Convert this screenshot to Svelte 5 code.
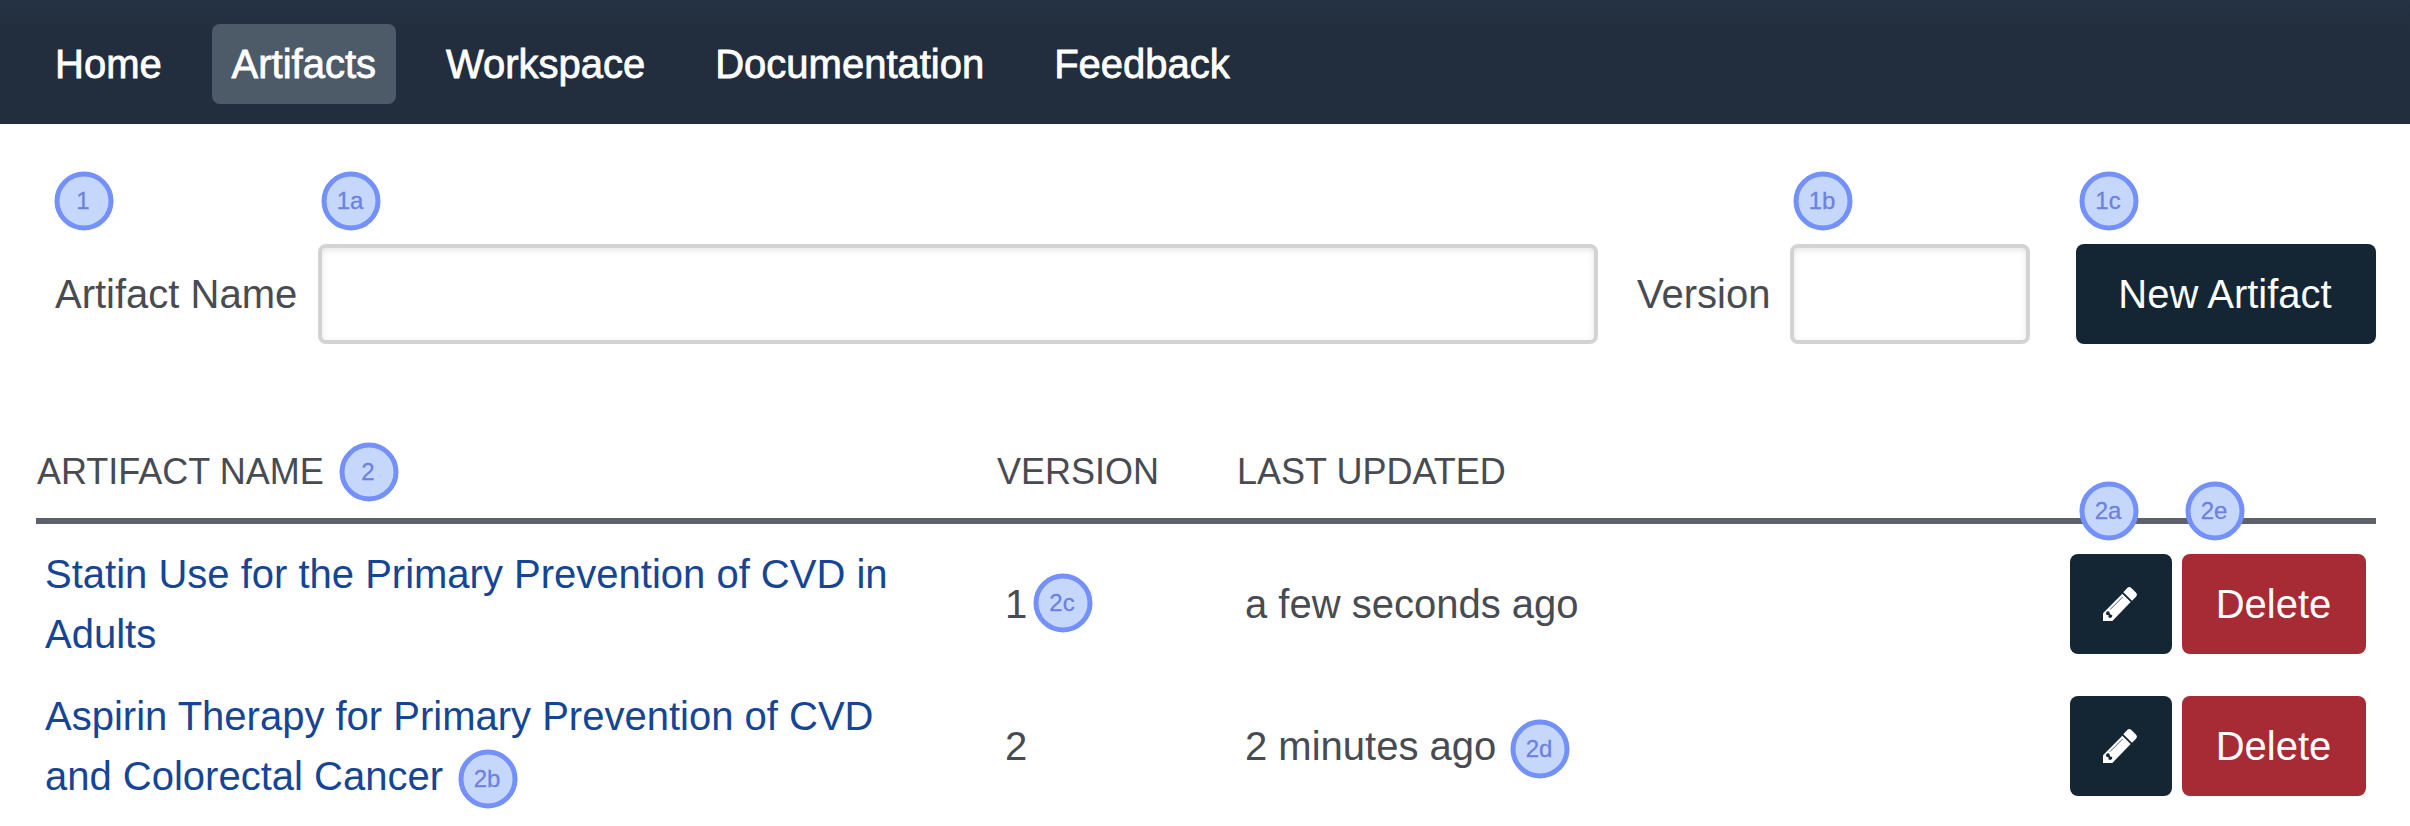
<script>
  const nav = ['Home', 'Artifacts', 'Workspace', 'Documentation', 'Feedback'];
  const active = 'Artifacts';
  const artifacts = [
    { name: 'Statin Use for the Primary Prevention of CVD in Adults', version: '1', updated: 'a few seconds ago' },
    { name: 'Aspirin Therapy for Primary Prevention of CVD and Colorectal Cancer', version: '2', updated: '2 minutes ago' }
  ];
  // Callout markers that float over the page, by centre point
  const markers = [
    { label: '1', x: 83.5, y: 200.5 },
    { label: '1a', x: 350.5, y: 200.5 },
    { label: '1b', x: 1822.5, y: 200.5 },
    { label: '1c', x: 2108.5, y: 200.5 },
    { label: '2', x: 368.5, y: 471.5 },
    { label: '2a', x: 2108.5, y: 510.5 },
    { label: '2e', x: 2214.5, y: 510.5 },
    { label: '2b', x: 487.5, y: 778.5 },
    { label: '2c', x: 1062.5, y: 602.5 },
    { label: '2d', x: 1539.5, y: 748.5 }
  ];
</script>

<div class="page">
  <nav>
    {#each nav as item}
      <a class:active={item === active}>{item}</a>
    {/each}
  </nav>

  <form>
    <label for="name">Artifact Name</label>
    <input id="name" class="name" type="text" />
    <label for="version" class="version-label">Version</label>
    <input id="version" class="version" type="text" />
    <button type="button" class="btn new">New Artifact</button>
  </form>

  <section class="table">
    <div class="row head">
      <span>ARTIFACT NAME</span>
      <span>VERSION</span>
      <span>LAST UPDATED</span>
    </div>
    <div class="body">
      {#each artifacts as a}
        <div class="row">
          <a class="link">{a.name}</a>
          <span>{a.version}</span>
          <span>{a.updated}</span>
          <div class="actions">
            <button class="btn edit" aria-label="Edit">
              <svg viewBox="0 0 132 132" width="44" height="44">
                <path fill="#fff" d="M15 94L73 35L98 60L43 117H15Z" />
                <path fill="#fff" d="M76 31L87 19Q93 12 100 18L113 31Q120 38 114 44L102 56Z" />
                <path fill="#142534" d="M24 92Q28 86 34 89L36 97L43 100Q44 106 37 108L31 106L32 100L25 98Z" />
                <path stroke="#142534" stroke-width="2.2" fill="none" d="M36 83L74 45" />
              </svg>
            </button>
            <button class="btn delete">Delete</button>
          </div>
        </div>
      {/each}
    </div>
  </section>

  {#each markers as m}
    <span class="marker" style="left:{m.x}px;top:{m.y}px">{m.label}</span>
  {/each}
</div>

<style>
  .page {
    position: relative;
    width: 2410px;
    height: 826px;
    overflow: hidden;
    background: #fff;
    color: #484b52;
    font: 40px/60px 'Liberation Sans', Arial, sans-serif;
  }
  nav {
    display: flex;
    align-items: center;
    gap: 30.9px;
    height: 124px;
    padding: 4px 35.5px 0;
    box-sizing: border-box;
    background: linear-gradient(#253243, #222e3e 30px);
  }
  nav a {
    height: 80px;
    line-height: 80px;
    padding: 0 19.5px;
    border-radius: 8px;
    color: #fff;
    -webkit-text-stroke: 0.8px #fff;
  }
  nav a.active {
    background: #4d5a67;
  }
  form {
    display: flex;
    align-items: center;
    height: 100px;
    margin-top: 120px;
    padding-left: 55px;
  }
  label {
    width: 263px;
  }
  .version-label {
    width: 153px;
    margin-left: 39px;
  }
  input {
    box-sizing: border-box;
    height: 100px;
    margin: 0;
    padding: 0 20px;
    border: 4px solid #d3d3d3;
    border-radius: 8px;
    background: #fff;
    box-shadow: inset 0 2px 6px rgba(0, 0, 0, 0.1);
    font: inherit;
    outline: none;
  }
  .name {
    width: 1280px;
  }
  .version {
    width: 240px;
  }
  .btn {
    display: flex;
    align-items: center;
    justify-content: center;
    height: 100px;
    padding: 0;
    border: 0;
    border-radius: 8px;
    background: #142534;
    color: #fff;
    font: inherit;
  }
  .new {
    width: 300px;
    margin-left: 46px;
    padding-right: 2px;
  }
  .edit {
    width: 102px;
    padding-right: 2px;
  }
  .delete {
    width: 184px;
    padding-right: 1px;
    background: #a72b35;
  }
  .table {
    margin: 79px 34px 0 36px;
  }
  .row {
    display: grid;
    grid-template-columns: 960px 240px 1fr auto;
    align-items: center;
    height: 142px;
    padding: 0 10px 0 9px;
  }
  .head {
    height: 93px;
    padding: 2px 0 0 1px;
    border-bottom: 6px solid #5d616b;
    font-size: 36px;
  }
  .body {
    padding-top: 9px;
  }
  .link {
    width: 880px;
    color: #154594;
  }
  .actions {
    display: flex;
    gap: 10px;
  }
  .marker {
    position: absolute;
    width: 59px;
    height: 59px;
    box-sizing: border-box;
    padding-right: 1px;
    border: 5px solid #7390fb;
    border-radius: 50%;
    background: #c5d8fb;
    color: #6f80df;
    font-size: 24px;
    line-height: 48px;
    text-align: center;
    -webkit-text-stroke: 0.3px #6f80df;
    transform: translate(-50%, -50%);
  }
</style>
